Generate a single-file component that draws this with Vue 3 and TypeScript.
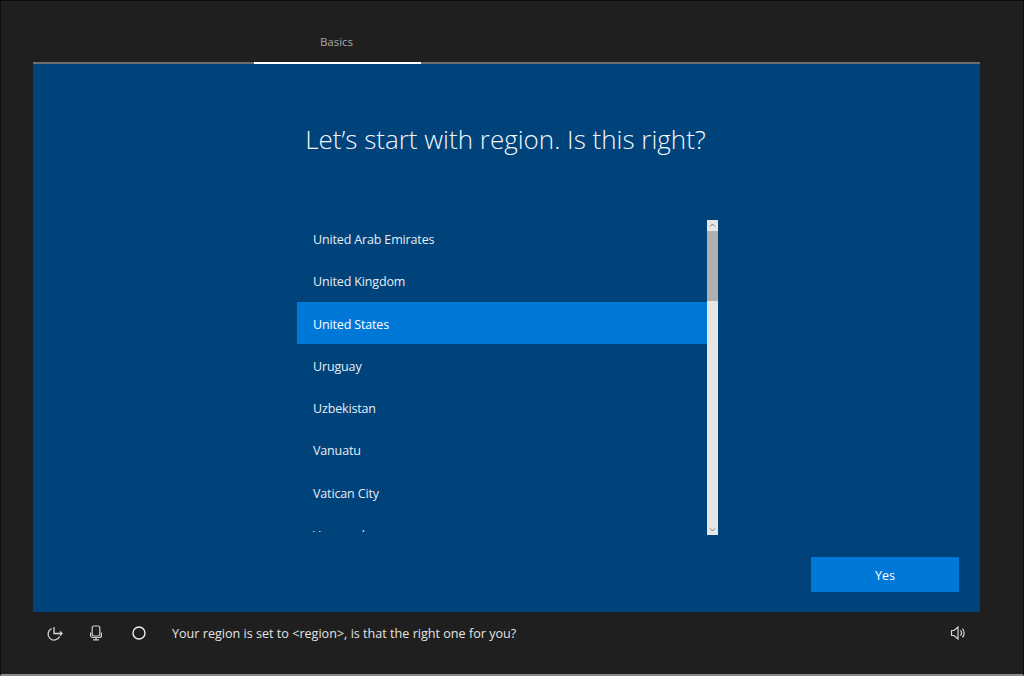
<script setup lang="ts">
const regions: string[] = ['United Arab Emirates', 'United Kingdom', 'United States', 'Uruguay', 'Uzbekistan', 'Vanuatu', 'Vatican City', 'Venezuela']
const selected = 'United States'
</script>

<template>
  <div class="frame">
    <header class="top">
      <div class="tab">Basics</div>
    </header>
    <main class="panel">
      <h1 class="title">Let’s start with region. Is this right?</h1>
      <div class="picker">
        <div class="list">
          <ul class="items">
            <li v-for="r in regions" :key="r" class="item" :class="{ active: r === selected }">{{ r }}</li>
          </ul>
        </div>
        <div class="scrollbar">
          <svg class="arrow" width="11" height="11" viewBox="0 0 11 11"><path d="M3 6.5 5.5 4 8 6.5" fill="none" stroke="#7d7d7d" stroke-width="1" /></svg>
          <div class="thumb"></div>
          <div class="track"></div>
          <svg class="arrow" width="11" height="11" viewBox="0 0 11 11"><path d="M3 4.5 5.5 7 8 4.5" fill="none" stroke="#7d7d7d" stroke-width="1" /></svg>
        </div>
      </div>
      <div class="actions">
        <button class="yes" type="button"><span class="yes-label">Yes</span></button>
      </div>
    </main>
    <footer class="bottom">
      <svg class="ic ic-access" width="18" height="18" viewBox="0 0 18 18" fill="none" stroke="#d6d6d6" stroke-width="1.3">
        <path d="M5.6 4.6A6 6 0 1 0 13.6 12.4" />
        <path d="M8 3V9.5H16" />
        <path d="M14 7.5 16 9.5 14 11.5" />
      </svg>
      <svg class="ic ic-mic" width="14" height="18" viewBox="0 0 14 18" fill="none" stroke="#cfcfcf" stroke-width="1.2">
        <rect x="3.2" y="2" width="7.6" height="10" rx="1.8" />
        <path d="M1.6 8.5V11.5A2 2 0 0 0 3.6 13.5H10.4A2 2 0 0 0 12.4 11.5V8.5" />
        <path d="M7 13.5V15.8M4 15.8H10" />
      </svg>
      <svg class="ic ic-circle" width="16" height="16" viewBox="0 0 16 16" fill="none" stroke="#f0f0f0" stroke-width="1.4">
        <circle cx="8" cy="8" r="6" />
      </svg>
      <span class="prompt">Your region is set to &lt;region&gt;, is that the right one for you?</span>
      <svg class="ic ic-sound" width="16" height="16" viewBox="0 0 16 16" fill="none" stroke="#d6d6d6" stroke-width="1.2">
        <path d="M1.5 5.5H4L8 2V14L4 10.5H1.5Z" />
        <path d="M10.4 5.4A3.8 3.8 0 0 1 10.4 10.6" />
        <path d="M12.4 3.6A6.4 6.4 0 0 1 12.4 12.4" />
      </svg>
    </footer>
  </div>
</template>

<style>
html, body { margin: 0; background: #1f1f1f; }
</style>

<style scoped>
.frame {
  width: 1024px;
  height: 676px;
  box-sizing: border-box;
  border: 1px solid #0c0c0c;
  border-bottom: 2px solid #8a8a8a;
  background: #1f1f1f;
  display: flex;
  flex-direction: column;
  overflow: hidden;
  font-family: "Open Sans", "Noto Sans", sans-serif;
  color: #fff;
}
.top {
  height: 63px;
  flex: none;
  box-sizing: border-box;
  margin: 0 43px 0 32px;
  border-bottom: 2px solid #6d6d6d;
  display: flex;
}
.tab {
  width: 167px;
  margin-left: 221px;
  margin-bottom: -2px;
  box-sizing: border-box;
  border-bottom: 2px solid #fff;
  text-align: center;
  font-size: 11.5px;
  color: #a9a9a9;
  padding-top: 33px;
  padding-right: 2px;
}
.panel {
  flex: none;
  height: 548px;
  margin: 0 43px 0 32px;
  background: #00427a;
  display: flex;
  flex-direction: column;
  align-items: center;
}
.title {
  margin: 0 2px 0 0;
  padding-top: 56px;
  height: 100px;
  box-sizing: border-box;
  font-size: 26px;
  line-height: 38px;
  font-weight: 300;
  color: #f2f6fa;
  white-space: nowrap;
}
.picker {
  margin-top: 56px;
  margin-left: 2px;
  width: 421px;
  height: 315px;
  display: flex;
}
.list {
  flex: 1;
  height: 312px;
  overflow: hidden;
}
.items {
  list-style: none;
  margin: -2.6px 0 0;
  padding: 0;
}
.item {
  height: 42.3px;
  line-height: 42.3px;
  padding-left: 16px;
  padding-top: 1.5px;
  font-size: 12.5px;
  letter-spacing: -0.15px;
  color: #e6eef6;
  box-sizing: border-box;
}
.item.active {
  background: #0078d7;
  color: #fff;
}
.scrollbar {
  width: 11px;
  flex: none;
  display: flex;
  flex-direction: column;
  background: #e6e6e6;
}
.arrow { flex: none; display: block; }
.thumb {
  height: 70px;
  flex: none;
  background: #b0b0b0;
}
.track { flex: 1; }
.actions {
  width: 100%;
  display: flex;
  justify-content: flex-end;
  padding-right: 21px;
  box-sizing: border-box;
  margin-top: 22px;
}
.yes {
  width: 148px;
  height: 35px;
  border: 0;
  padding: 2px 0 0;
  background: #0078d7;
  color: #fff;
  font: inherit;
  font-size: 12.5px;
  line-height: 17px;
}
.yes-label { display: block; }
.bottom {
  flex: 1;
  display: flex;
  align-items: center;
  padding-bottom: 20px;
}
.ic { flex: none; display: block; }
.ic-access { margin-left: 45px; }
.ic-mic { margin-left: 25px; }
.ic-circle { margin-left: 28px; }
.prompt {
  margin-left: 25px;
  flex: 1;
  font-size: 12.6px;
  color: #e4e4e4;
}
.ic-sound { margin-right: 57px; }
</style>
